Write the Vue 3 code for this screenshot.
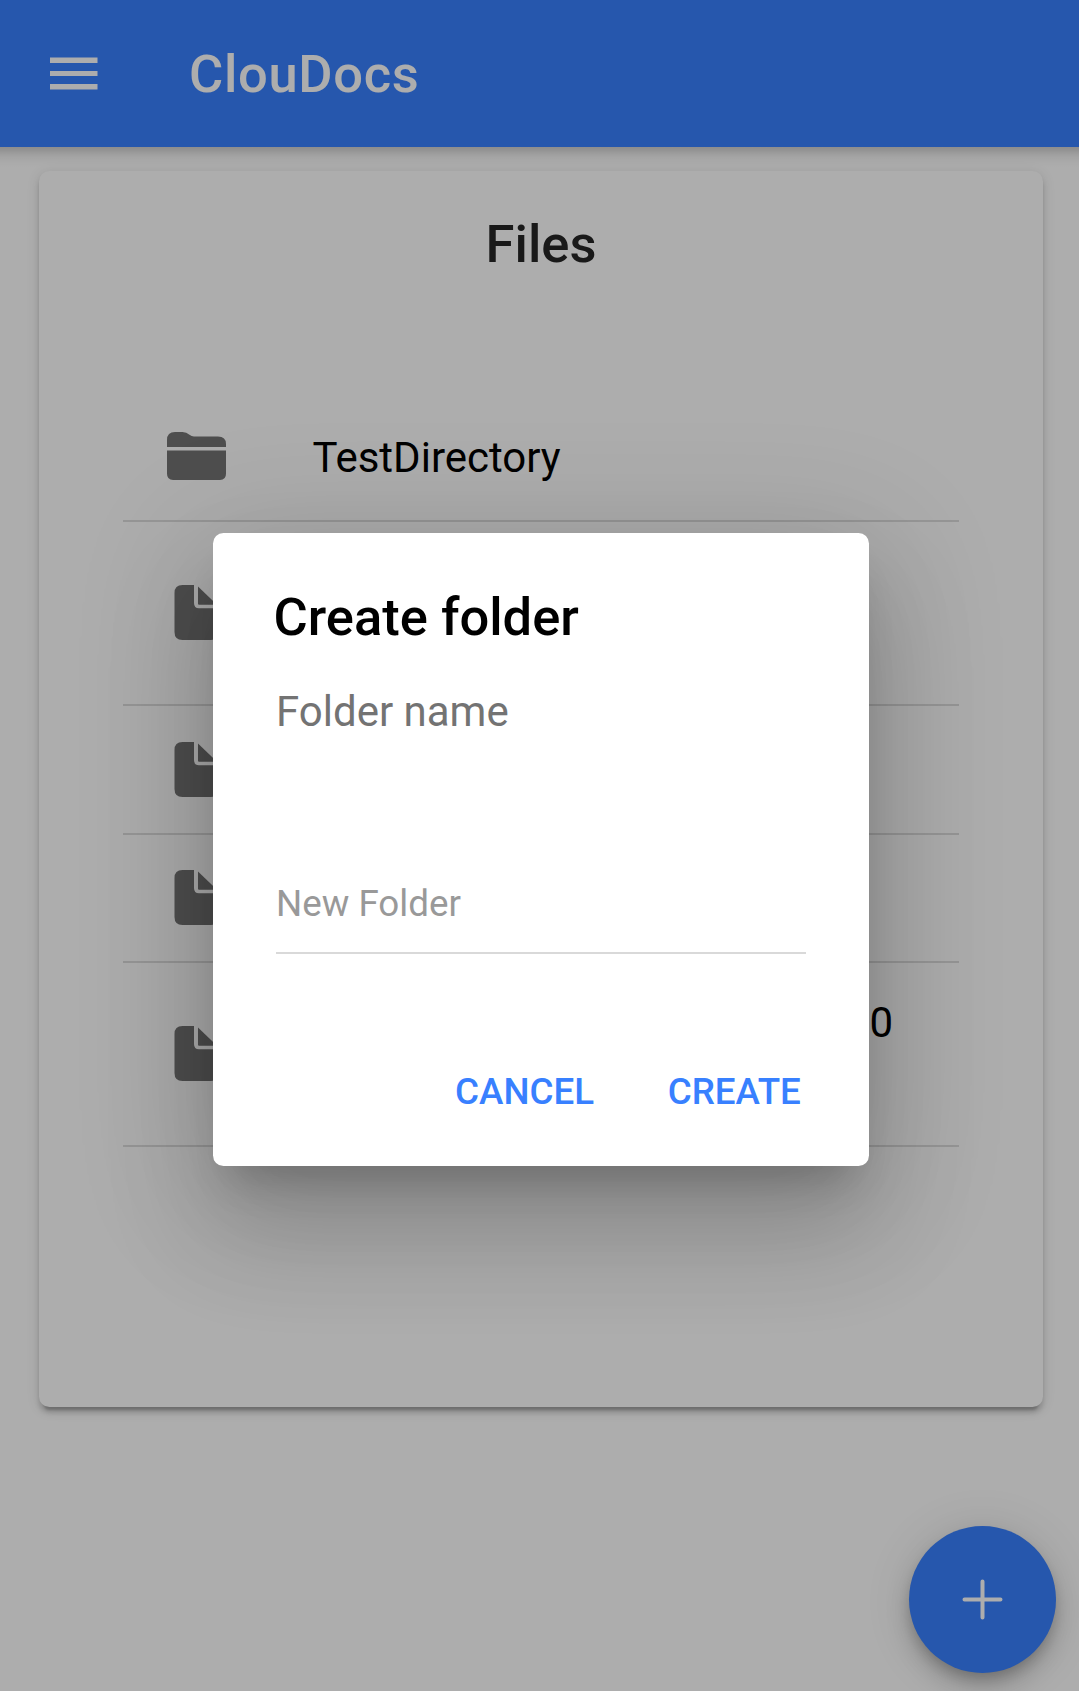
<script setup>
const rows = [
  { kind: 'folder', name: 'TestDirectory' },
  { kind: 'file', tall: true },
  { kind: 'file' },
  { kind: 'file', high: true },
  { kind: 'file', tall: true, tail: '0' },
]
</script>

<template>
  <div class="app">
    <header class="toolbar">
      <svg class="menu" width="48" height="33" viewBox="0 0 48 33">
        <path d="M0 .5h47.500v5.500H0zM0 14h47.500v5H0zM0 27h47.500v5.500H0z" fill="#fff" />
      </svg>
      <h1>ClouDocs</h1>
    </header>

    <main class="content">
      <section class="card">
        <h2>Files</h2>
        <ul class="list">
          <li v-for="(row, i) in rows" :key="i" :class="['row', { tall: row.tall, high: row.high }]">
            <svg v-if="row.kind === 'folder'" class="icon" width="60" height="48" viewBox="0 0 60 48">
              <path d="M0 15V8Q0 0 8 0h7.500Q19.500 0 22.500 2.700Q24.500 4.500 27 4.500H51Q59 4.500 59 12V15z" />
              <path d="M0 18.500H59V41.500Q59 48 53 48H6Q0 48 0 41.500z" />
            </svg>
            <svg v-else class="icon" width="60" height="55" viewBox="0 0 60 55">
              <path d="M15.500 0H27V18Q27 23.300 32 23.300H52V47Q52 55 44 55H15.500Q7.500 55 7.500 47V8Q7.500 0 15.500 0z" />
              <path d="M31 1.500L50 19.700H32Q31 19.700 31 18.500z" />
            </svg>
            <span v-if="row.name" class="name label">{{ row.name }}</span>
            <span v-if="row.tail" class="name tail">{{ row.tail }}</span>
          </li>
        </ul>
      </section>
    </main>

    <button class="fab" aria-label="Add">
      <svg width="41" height="41" viewBox="0 0 41 41">
        <path d="M20.500 2.500V38.500M2.500 20.500H38.500" stroke="#fff" stroke-width="4" stroke-linecap="round" />
      </svg>
    </button>

    <div class="backdrop">
      <div class="alert" role="dialog">
        <h3>Create folder</h3>
        <p class="message">Folder name</p>
        <div class="field">New Folder</div>
        <div class="actions">
          <button>CANCEL</button>
          <button>CREATE</button>
        </div>
      </div>
    </div>
  </div>
</template>

<style>
html,
body {
  margin: 0;
  background: #fff;
}
</style>

<style scoped>
.app {
  position: relative;
  width: 1079px;
  height: 1691px;
  overflow: hidden;
  background: #fff;
  font-family: Roboto, sans-serif;
}
h1,
h2,
h3,
p,
ul {
  margin: 0;
  padding: 0;
  font-weight: 500;
}
button {
  border: 0;
  padding: 0;
  background: none;
  font-family: inherit;
}
.toolbar {
  position: relative;
  display: flex;
  align-items: center;
  height: 147px;
  padding-left: 50px;
  box-sizing: border-box;
  background: #3880ff;
}
.toolbar::after {
  content: '';
  position: absolute;
  left: 0;
  right: 0;
  top: 147px;
  height: 20px;
  background: linear-gradient(rgba(0, 0, 0, 0.18), rgba(0, 0, 0, 0.15) 15%, rgba(0, 0, 0, 0.06) 45%, rgba(0, 0, 0, 0.02) 75%, transparent);
}
.toolbar h1 {
  margin-left: 91px;
  color: #fff;
  font-size: 52.5px;
  line-height: 62px;
  letter-spacing: 0.0125em;
}
.content {
  padding: 24px 36px 0 39px;
}
.card {
  height: 1236px;
  padding-top: 40px;
  box-sizing: border-box;
  border-radius: 10.5px;
  background: #fff;
  box-shadow: 0 7.9px 2.6px -5.25px rgba(0, 0, 0, 0.2), 0 5.25px 5.25px 0 rgba(0, 0, 0, 0.14), 0 2.6px 13px 0 rgba(0, 0, 0, 0.12);
}
.card h2 {
  color: #262626;
  font-size: 52.5px;
  line-height: 66px;
  text-align: center;
}
.list {
  margin: 116px 84px 0;
  list-style: none;
}
.row {
  display: flex;
  align-items: center;
  height: 127px;
  padding-left: 44px;
  border-bottom: 2px solid #dedede;
}
.row.tall {
  height: 182px;
}
.row.high {
  height: 126px;
}
.icon {
  flex: none;
  margin-bottom: 1px;
  fill: #747474;
}
.name {
  margin-left: 85px;
  font-weight: 400;
  font-size: 42px;
  line-height: 64px;
  color: #000;
}
.label {
  margin-left: 85.4px;
  padding-top: 2px;
}
.tail {
  width: 581px;
  height: 127px;
  text-align: right;
}
.fab {
  position: absolute;
  left: 909px;
  top: 1526px;
  display: flex;
  align-items: center;
  justify-content: center;
  width: 147px;
  height: 147px;
  border-radius: 50%;
  background: #3880ff;
  box-shadow: 0 7.9px 13px -2.6px rgba(0, 0, 0, 0.2), 0 15.75px 26px 0 rgba(0, 0, 0, 0.14), 0 2.6px 47px 0 rgba(0, 0, 0, 0.12);
}
.backdrop {
  position: absolute;
  inset: 0;
  display: flex;
  justify-content: center;
  align-items: flex-start;
  padding: 533px 0 0 3px;
  box-sizing: border-box;
  background: rgba(0, 0, 0, 0.32);
}
.alert {
  width: 656px;
  height: 633px;
  padding: 53px 63px 0;
  box-sizing: border-box;
  border-radius: 10.5px;
  background: #fff;
  box-shadow: 0 29px 39px -18px rgba(0, 0, 0, 0.2), 0 63px 106px 8px rgba(0, 0, 0, 0.14), 0 24px 128px 21px rgba(0, 0, 0, 0.12);
}
.alert h3 {
  margin-left: -2.5px;
  font-size: 52.5px;
  line-height: 62px;
  color: #000;
}
.message {
  margin-top: 38px;
  font-size: 42px;
  font-weight: 400;
  line-height: 51px;
  color: #737373;
}
.field {
  margin-top: 118px;
  height: 97px;
  border-bottom: 2px solid #d9d9d9;
  font-size: 36.75px;
  line-height: 97px;
  color: #999;
}
.actions {
  display: flex;
  justify-content: flex-end;
  gap: 73.5px;
  margin-top: 116px;
  padding-right: 5.2px;
}
.actions button {
  font-size: 36.75px;
  font-weight: 500;
  line-height: 44px;
  color: #3880ff;
}
</style>
